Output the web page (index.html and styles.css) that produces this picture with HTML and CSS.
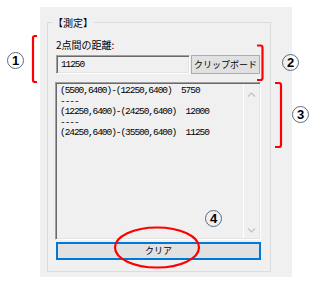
FILE: index.html
```html
<!DOCTYPE html>
<html lang="ja">
<head>
    <meta charset="UTF-8">
    <meta name="viewport" content="width=device-width, initial-scale=1.0">
    <title>測定</title>
    <link rel="stylesheet" href="styles.css">
</head>
<body>
    <div class="panel">
        <div class="group">
            <div class="legend">【測定】</div>
            <div class="label">2点間の距離:</div>
            <div class="row">
                <div class="textbox">11250</div>
                <button class="btn copy">クリップボード</button>
            </div>
            <div class="listbox">
                <div class="lines">
                    <div class="line">(5500,6400)-(12250,6400)  5750</div>
                    <div class="line">----</div>
                    <div class="line">(12250,6400)-(24250,6400)  12000</div>
                    <div class="line">----</div>
                    <div class="line">(24250,6400)-(35500,6400)  11250</div>
                </div>
                <div class="scrollbar">
                    <svg width="15" height="10" viewBox="0 0 15 10"><path d="M4 6.5 L7.5 3 L11 6.5" fill="none" stroke="#c0c0c0" stroke-width="1.2"/></svg>
                    <svg width="15" height="10" viewBox="0 0 15 10"><path d="M4 3.5 L7.5 7 L11 3.5" fill="none" stroke="#c0c0c0" stroke-width="1.2"/></svg>
                </div>
            </div>
            <button class="btn clear">クリア</button>
        </div>
    </div>

    <!-- annotations drawn over the screenshot -->
    <svg class="marks" width="316" height="284" viewBox="0 0 316 284">
        <path d="M37 36 H35 Q33 36 33 38 V80 Q33 82 35 82 H37" />
        <path d="M257 45.5 H260.5 Q262.5 45.5 262.5 47.5 V78 Q262.5 80 260.5 80 H257" />
        <path d="M275 83 H279 Q281 83 281 85 V145 Q281 147 279 147 H275" />
        <ellipse cx="157" cy="247.5" rx="42" ry="20" />
    </svg>
    <span class="num n1">1</span>
    <span class="num n2">2</span>
    <span class="num n3">3</span>
    <span class="num n4">4</span>
</body>
</html>
```

FILE: styles.css
```css
body {
    margin: 0px;
    padding: 0px;
    background-color: #ffffff;
    position: relative;
    width: 316px;
    height: 284px;
    overflow: hidden;
    font-family: "Liberation Sans", "Noto Sans CJK JP", sans-serif;
    color: #000000;
}
.panel {
    margin: 7px 0px 0px 40px;
    width: 252px;
    height: 270px;
    box-sizing: border-box;
    padding: 15px 21px 7px 7px;
    background-color: #f0f0f0;
}
.group {
    height: 248px;
    border: 1px solid #dcdcdc;
    padding: 0px 9px 0px 8px;
}
.legend {
    width: fit-content;
    margin: -7px 0px 0px -4px;
    height: 14px;
    line-height: 14px;
    padding: 0px 1px;
    font-family: "Noto Sans CJK JP", sans-serif;
    font-size: 10px;
    background-color: #f0f0f0;
}
.label {
    margin-top: 9px;
    height: 12px;
    line-height: 12px;
    font-family: "Noto Sans CJK JP", sans-serif;
    font-size: 10px;
}
.row {
    display: flex;
    gap: 1px;
    margin-top: 4px;
    height: 19px;
}
.textbox {
    width: 134px;
    box-sizing: border-box;
    border-top: 1px solid #a0a0a0;
    border-left: 1px solid #a0a0a0;
    border-right: 1px solid #ffffff;
    border-bottom: 1px solid #ffffff;
    box-shadow: inset 1px 1px #696969, inset -1px -1px #e3e3e3;
    padding: 0px 4px;
    font-family: "Liberation Mono", monospace;
    font-size: 9.5px;
    letter-spacing: -1.1px;
    line-height: 17px;
    background-color: #f0f0f0;
}
.btn {
    margin: 0px;
    padding: 0px;
    box-sizing: border-box;
    background-color: #e1e1e1;
    border: 1px solid #adadad;
    font-family: "Noto Sans CJK JP", sans-serif;
    font-size: 9px;
    color: #000000;
    white-space: nowrap;
}
.copy {
    width: 69px;
    height: 19px;
    line-height: 17px;
}
.listbox {
    display: flex;
    margin: 8px 0px 0px -1px;
    width: 206px;
    height: 158px;
    box-sizing: border-box;
    border-top: 1px solid #a0a0a0;
    border-left: 1px solid #a0a0a0;
    border-right: 1px solid #ffffff;
    border-bottom: 1px solid #ffffff;
    box-shadow: inset 1px 1px #696969, inset -1px -1px #e3e3e3;
}
.lines {
    flex: 1;
    padding: 3px 0px 0px 4px;
    font-family: "Liberation Mono", monospace;
    font-size: 9.5px;
    letter-spacing: -1.05px;
    line-height: 10.5px;
}
.line {
    white-space: pre;
    height: 10.5px;
}
.scrollbar {
    width: 15px;
    margin: 1px 1px 1px 0px;
    border-left: 1px solid #ffffff;
    display: flex;
    flex-direction: column;
    justify-content: space-between;
    padding: 6px 0px 3px;
}
.clear {
    display: block;
    margin-top: 2px;
    width: 205px;
    height: 18px;
    border: 2px solid #0078d7;
    line-height: 14px;
}
.marks {
    position: absolute;
    left: 0px;
    top: 0px;
    fill: none;
    stroke: #ff0000;
    stroke-width: 2.2;
}
.num {
    position: absolute;
    width: 17px;
    height: 17px;
    box-sizing: border-box;
    border: 1px solid #5a6a80;
    border-radius: 50%;
    line-height: 15px;
    text-align: center;
    font-family: "Liberation Sans", sans-serif;
    font-weight: bold;
    font-size: 13px;
    color: #000000;
}
.n1 { left: 7px; top: 52px; }
.n2 { left: 282px; top: 54px; }
.n3 { left: 292px; top: 106px; }
.n4 { left: 205px; top: 210px; }
```
